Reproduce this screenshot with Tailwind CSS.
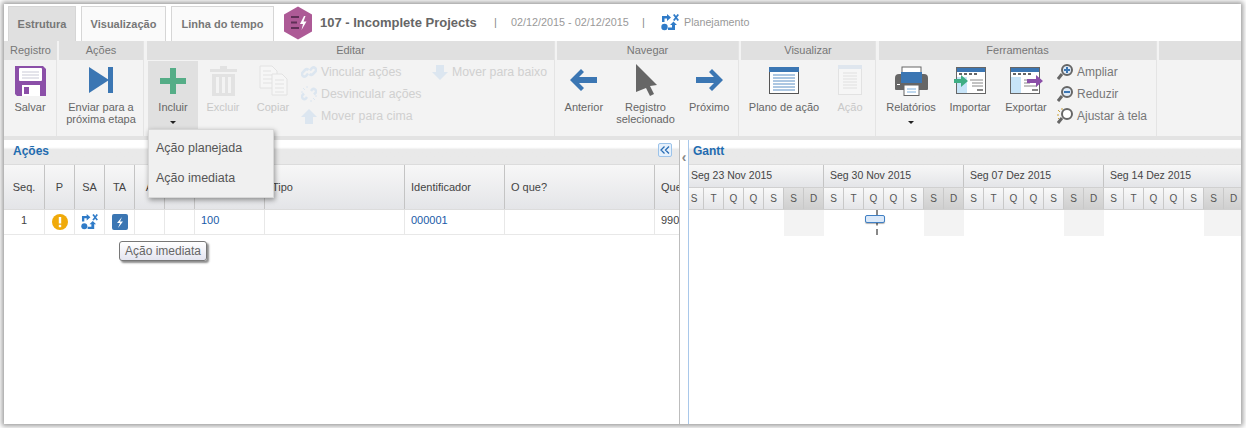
<!DOCTYPE html>
<html lang="en">
<head>
  <meta charset="UTF-8" />
  <title>107 - Incomplete Projects</title>
  <script src="https://cdn.jsdelivr.net/npm/@tailwindcss/browser@4"></script>
</head>
<body class="bg-white h-[428px] w-[1246px] overflow-hidden font-['Liberation_Sans',Arial,sans-serif] text-[11px] text-[#666]">
<div class="relative ml-[4px] mt-[4px] w-[1237px] h-[420px] bg-white shadow-[0_0_5px_2px_rgba(0,0,0,0.4)] flex flex-col">

  <!-- tabs and title -->
  <div class="h-[37px] flex items-end shrink-0">
    <div class="ml-[4px] w-[68px] h-[35px] bg-[#e0e0e0] border border-[#d6d6d6] border-b-0 flex items-center justify-center font-bold text-[#777]">Estrutura</div>
    <div class="ml-[5px] w-[85px] h-[35px] bg-[#fafafa] border border-[#d6d6d6] border-b-0 flex items-center justify-center font-bold text-[#777]">Visualização</div>
    <div class="ml-[5px] w-[103px] h-[35px] bg-[#fafafa] border border-[#d6d6d6] border-b-0 flex items-center justify-center font-bold text-[#777]">Linha do tempo</div>
    <div class="self-center flex items-center ml-[9px]">
      <svg width="30" height="34" viewBox="0 0 30 34"><path d="M15 0.500 29 8.500V25.500L15 33.500 1 25.500V8.500Z" fill="#ad5a96"/><path d="M8 11h8M8 16.500h6M8 22h8" stroke="#5e2f56" stroke-width="2"/><path d="M21 10l-4 8h3l-1.500 6 5-8.500h-3l2-5.500z" fill="#fff"/></svg>
      <span class="ml-[7px] w-[174px] text-[13px] font-bold text-[#666]">107 - Incomplete Projects</span>
      <span class="text-[#888] w-[17px]">|</span>
      <span class="w-[131px] text-[10.800px] text-[#999]">02/12/2015 - 02/12/2015</span>
      <span class="text-[#888] w-[19px]">|</span>
      <svg width="18" height="17" viewBox="0 0 18 17" fill="#2f7bc8"><path d="M1 8V2h5V0l4 3.500-4 3.500V4.500H3.500V8z"/><path d="M12 1l1.500-1L15 2l1.500-2L18 1l-2 2.500L18 6l-1.500 1L15 5l-1.500 2L12 6l2-2.500z"/><circle cx="3.500" cy="13" r="3.200"/><path d="M7 16v-2.500h4V11H9l3.500-3.500L16 11h-2v5z"/></svg>
      <span class="ml-[5px] text-[10.700px] text-[#999]">Planejamento</span>
    </div>
  </div>

  <!-- ribbon -->
  <div class="h-[99px] shrink-0 bg-[#f3f3f3] border-b-[4px] border-[#e3e3e3] flex">
    <div class="w-[53px] flex flex-col border-r border-[#e4e4e4]">
      <div class="h-[19px] bg-[#e0e0e0] text-center leading-[19px] text-[#777] mr-[-1px]">Registro</div>
      <div class="flex flex-col items-center pt-[5px]">
        <svg width="31" height="31" viewBox="0 0 31 31"><path d="M0 1h28l3 3v27H2l-2-2z" fill="#8b4fa8"/><rect x="4" y="3" width="23" height="13" rx="1" fill="#fff"/><path d="M7 7h17M7 10h17M7 13h17" stroke="#c9c9d6"/><rect x="7" y="20" width="18" height="11" fill="#fff"/><rect x="9" y="22" width="5" height="7" fill="#8b4fa8"/></svg>
        <span class="mt-[5px] leading-[12px]">Salvar</span>
      </div>
    </div>
    <div class="ml-[2px] w-[85px] flex flex-col border-r border-[#e4e4e4]">
      <div class="h-[19px] bg-[#e0e0e0] text-center leading-[19px] text-[#777]">Ações</div>
      <div class="flex flex-col items-center pt-[7px]">
        <svg width="25" height="26" viewBox="0 0 25 26" fill="#3b76b3"><path d="M0 0l20 13L0 26z"/><rect x="19" y="0" width="5" height="26"/></svg>
        <span class="mt-[8px] leading-[12px] text-center">Enviar para a<br>próxima etapa</span>
      </div>
    </div>
    <div class="ml-[3px] w-[408px] flex flex-col border-r border-[#e4e4e4]">
      <div class="h-[19px] bg-[#e0e0e0] text-center leading-[19px] text-[#777]">Editar</div>
      <div class="flex flex-1 pl-[1px]">
        <div class="w-[50px] mt-[1px] bg-[#e0e0e0] flex flex-col items-center pt-[7px]">
          <svg width="26" height="26" viewBox="0 0 26 26" fill="#55ad87"><path d="M10 0h6v10h10v6H16v10h-6V16H0v-6h10z"/></svg>
          <span class="mt-[7px] leading-[12px]">Incluir</span>
          <span class="mt-[8px] w-0 h-0 border-x-[3px] border-x-transparent border-t-[3px] border-t-[#222]"></span>
        </div>
        <div class="w-[50px] flex flex-col items-center pt-[5px] text-[#c8c8c8]">
          <svg width="27" height="31" viewBox="0 0 27 31" fill="#e2e2e2"><path d="M0 4h10V1h7v3h10v3H0z"/><path d="M2 9h23v22H2zM6 12v16h3V12zM12 12v16h3V12zM18 12v16h3V12z" fill-rule="evenodd"/></svg>
          <span class="mt-[5px] leading-[12px]">Excluir</span>
        </div>
        <div class="w-[50px] flex flex-col items-center pt-[5px] text-[#c8c8c8]">
          <svg width="29" height="31" viewBox="0 0 29 31" fill="none" stroke="#e2e2e2"><path d="M1 1h12l5 5v17H1z" fill="#f6f6f6"/><path d="M4 6h8M4 10h11M4 14h11M4 18h11"/><path d="M13 9h10l5 5v16H13z" fill="#f6f6f6"/><path d="M16 15h9M16 19h9M16 23h9M16 27h9"/></svg>
          <span class="mt-[5px] leading-[12px]">Copiar</span>
        </div>
        <div class="w-[131px] ml-[3px] pt-[1px] flex flex-col text-[12.300px] text-[#d0d0d0]">
          <div class="h-[22px] flex items-center gap-[4px]"><svg width="16" height="16" viewBox="0 0 16 16" fill="none" stroke="#dce6f0" stroke-width="2.500"><path d="M7 9.500l-2 2.500a2.500 2.500 0 0 1-3.500-3.500L4 6a2.500 2.500 0 0 1 3.500 0M9 6.500L11 4a2.500 2.500 0 0 1 3.500 3.500L12 10a2.500 2.500 0 0 1-3.500 0"/></svg>Vincular ações</div>
          <div class="h-[22px] flex items-center gap-[4px]"><svg width="16" height="16" viewBox="0 0 16 16" fill="none" stroke="#dce6f0" stroke-width="2.500"><path d="M6 11l-1 1.500a2.500 2.500 0 0 1-3.500-3.500L3 7.500M10 5l1-1.500a2.500 2.500 0 0 1 3.500 3.500L13 8.500"/><path d="M2 2l2 2M6 0v2M0 6h2M14 14l-2-2M10 16v-2M16 10h-2" stroke-width="1"/></svg>Desvincular ações</div>
          <div class="h-[22px] flex items-center gap-[4px]"><svg width="16" height="15" viewBox="0 0 16 15" fill="#dce6f0"><path d="M8 0l8 8h-4v7H4V8H0z"/></svg>Mover para cima</div>
        </div>
        <div class="pt-[1px] text-[12.300px] text-[#d0d0d0]">
          <div class="h-[22px] flex items-center gap-[4px]"><svg width="16" height="15" viewBox="0 0 16 15" fill="#dce6f0"><path d="M8 15L0 7h4V0h8v7h4z"/></svg>Mover para baixo</div>
        </div>
      </div>
    </div>
    <div class="ml-[2px] w-[182px] flex flex-col border-r border-[#e4e4e4]">
      <div class="h-[19px] bg-[#e0e0e0] text-center leading-[19px] text-[#777]">Navegar</div>
      <div class="flex flex-1">
        <div class="w-[54px] flex flex-col items-center pt-[9px]">
          <svg width="27" height="22" viewBox="0 0 27 22" fill="#3b76b3"><path d="M11 0l3 3-5 5h18v6H9l5 5-3 3L0 11z"/></svg>
          <span class="mt-[10px] leading-[12px]">Anterior</span>
        </div>
        <div class="w-[70px] flex flex-col items-center pt-[4px]">
          <svg width="23" height="32" viewBox="0 0 23 32" fill="#666" class="ml-[3px]"><path d="M0 0l21 21-7 1 4 8-4 2-4-8-10 4z"/></svg>
          <span class="mt-[5px] leading-[12px] text-center">Registro<br>selecionado</span>
        </div>
        <div class="w-[58px] flex flex-col items-center pt-[9px]">
          <svg width="27" height="22" viewBox="0 0 27 22" fill="#3b76b3"><path d="M16 0l-3 3 5 5H0v6h18l-5 5 3 3 11-11z"/></svg>
          <span class="mt-[10px] leading-[12px]">Próximo</span>
        </div>
      </div>
    </div>
    <div class="ml-[2px] w-[135px] flex flex-col border-r border-[#e4e4e4]">
      <div class="h-[19px] bg-[#e0e0e0] text-center leading-[19px] text-[#777]">Visualizar</div>
      <div class="flex flex-1">
        <div class="w-[86px] flex flex-col items-center pt-[7px]">
          <svg width="30" height="27" viewBox="0 0 30 27"><rect x="0.500" y="0.500" width="29" height="26" fill="#fff" stroke="#555"/><rect width="30" height="5" fill="#3b76b3"/><path d="M4 8h22M4 11h22M4 14h22M4 17h22M4 20h22M4 23h22" stroke="#5b8fc5"/></svg>
          <span class="mt-[7px] leading-[12px]">Plano de ação</span>
        </div>
        <div class="w-[46px] flex flex-col items-center pt-[5px] text-[#c8c8c8]">
          <svg width="24" height="30" viewBox="0 0 24 30"><rect x="0.500" y="0.500" width="23" height="29" fill="#f6f6f6" stroke="#e2e2e2"/><rect width="24" height="4" fill="#dfe6ee"/><path d="M5 8h14M5 11h14M5 14h14M5 17h14M5 20h14M5 23h14" stroke="#e0e0e0"/></svg>
          <span class="mt-[6px] leading-[12px]">Ação</span>
        </div>
      </div>
    </div>
    <div class="ml-[3px] w-[278px] flex flex-col border-r border-[#e4e4e4]">
      <div class="h-[19px] bg-[#e0e0e0] text-center leading-[19px] text-[#777]">Ferramentas</div>
      <div class="flex flex-1">
        <div class="w-[64px] flex flex-col items-center pt-[6px]">
          <svg width="33" height="30" viewBox="0 0 33 30"><rect x="7" y="1" width="19" height="10" fill="#fff" stroke="#666"/><path d="M0 12a4 4 0 0 1 4-4h25a4 4 0 0 1 4 4v11a1 1 0 0 1-1 1H1a1 1 0 0 1-1-1z" fill="#666"/><rect x="6" y="6" width="21" height="11" fill="#3b76b3"/><rect x="9" y="19" width="15" height="10.500" fill="#fff" stroke="#666"/><path d="M12 23h9M12 26h9" stroke="#7fb0dc"/><rect x="2" y="18" width="3" height="1" fill="#fff"/></svg>
          <span class="mt-[5px] leading-[12px]">Relatórios</span>
          <span class="mt-[8px] w-0 h-0 border-x-[3px] border-x-transparent border-t-[3px] border-t-[#222]"></span>
        </div>
        <div class="w-[54px] flex flex-col items-center pt-[7px]">
          <svg width="32" height="27" viewBox="0 0 32 27"><rect x="2.500" y="0.500" width="29" height="26" fill="#fff" stroke="#666"/><rect x="3" y="1" width="28" height="4" fill="#3b76b3"/><path d="M5 7h3M10 7h3M15 7h3M20 7h3" stroke="#666" stroke-width="2"/><rect x="3" y="10" width="10" height="16" fill="#c7e4f8"/><path d="M16 13h13M18 16h11M18 19h11" stroke="#888"/><rect x="23" y="22" width="6" height="2" fill="#888"/><path d="M0 12h7V8l7 6-7 6v-4H0z" fill="#3fae84"/></svg>
          <span class="mt-[7px] leading-[12px]">Importar</span>
        </div>
        <div class="w-[58px] flex flex-col items-center pt-[7px]">
          <svg width="33" height="27" viewBox="0 0 33 27"><rect x="0.500" y="0.500" width="29" height="26" fill="#fff" stroke="#666"/><rect x="1" y="1" width="28" height="4" fill="#3b76b3"/><path d="M3 7h3M8 7h3M13 7h3M18 7h3" stroke="#666" stroke-width="2"/><rect x="1" y="10" width="10" height="16" fill="#c7e4f8"/><path d="M14 13h13M14 16h6M14 19h13" stroke="#888"/><rect x="22" y="22" width="6" height="2" fill="#888"/><path d="M17 12h9V8l7 6-7 6v-4h-9z" fill="#8b4fa8"/></svg>
          <span class="mt-[7px] leading-[12px]">Exportar</span>
        </div>
        <div class="ml-[2px] pt-[1px] flex flex-col text-[12px] text-[#777]">
          <div class="h-[22px] flex items-center gap-[4px]"><svg width="16" height="16" viewBox="0 0 16 16"><path d="M1 15l4-5" stroke="#666" stroke-width="3"/><circle cx="10" cy="6" r="5" fill="#dfeaf6" stroke="#666" stroke-width="2"/><path d="M7 6h6M10 3v6" stroke="#3b76b3" stroke-width="2"/></svg>Ampliar</div>
          <div class="h-[22px] flex items-center gap-[4px]"><svg width="16" height="16" viewBox="0 0 16 16"><path d="M1 15l4-5" stroke="#666" stroke-width="3"/><circle cx="10" cy="6" r="5" fill="#dfeaf6" stroke="#666" stroke-width="2"/><path d="M7 6h6" stroke="#3b76b3" stroke-width="2"/></svg>Reduzir</div>
          <div class="h-[22px] flex items-center gap-[4px]"><svg width="16" height="16" viewBox="0 0 16 16"><path d="M1 15l4-5" stroke="#666" stroke-width="3"/><circle cx="10" cy="6" r="5" fill="#fff" stroke="#666" stroke-width="2"/><path d="M1 2l2 2M0 7h2M5 0v2M1 11l1-1" stroke="#c9a23c"/></svg>Ajustar à tela</div>
        </div>
      </div>
    </div>
    <div class="ml-[2px] flex-1"><div class="h-[19px] bg-[#e0e0e0]"></div></div>
  </div>

  <!-- panels -->
  <div class="flex flex-1 min-h-0">
    <div class="w-[675px] shrink-0 overflow-hidden flex flex-col">
      <div class="h-[24px] shrink-0 bg-gradient-to-b from-white from-30% to-[#e9e9e9] to-40% flex items-center justify-between pl-[9px] pr-[7px]">
        <span class="font-bold text-[12px] text-[#1f6cb0] pb-[3px]">Ações</span>
        <span class="w-[14px] h-[14px] mb-[4px] rounded-[2px] border border-[#9cc3ea] bg-[#e6f1fc] flex items-center justify-center">
          <svg width="10" height="8" viewBox="0 0 10 8" fill="none" stroke="#2a6db5" stroke-width="1.300"><path d="M4.500 0.500L1 4l3.500 3.500M9 0.500L5.500 4 9 7.500"/></svg>
        </span>
      </div>
      <div class="h-[46px] shrink-0 flex border-y border-[#dcdcdc] bg-gradient-to-b from-[#f7f7f7] to-[#e4e5e8] text-[#444] items-stretch">
        <div class="w-[41px] shrink-0 border-r border-[#c4c4c4] flex items-center justify-center">Seq.</div>
        <div class="w-[30px] shrink-0 border-r border-[#c4c4c4] flex items-center justify-center">P</div>
        <div class="w-[30px] shrink-0 border-r border-[#c4c4c4] flex items-center justify-center">SA</div>
        <div class="w-[30px] shrink-0 border-r border-[#c4c4c4] flex items-center justify-center">TA</div>
        <div class="w-[30px] shrink-0 border-r border-[#c4c4c4] flex items-center justify-center">A</div>
        <div class="w-[30px] shrink-0 border-r border-[#c4c4c4]"></div>
        <div class="w-[70px] shrink-0 border-r border-[#c4c4c4]"></div>
        <div class="w-[140px] shrink-0 border-r border-[#c4c4c4] flex items-center pl-[7px]">Tipo</div>
        <div class="w-[100px] shrink-0 border-r border-[#c4c4c4] flex items-center pl-[6px]">Identificador</div>
        <div class="w-[150px] shrink-0 border-r border-[#c4c4c4] flex items-center pl-[6px]">O que?</div>
        <div class="w-[34px] shrink-0 flex items-center pl-[6px] overflow-hidden">Quem</div>
      </div>
      <div class="h-[25px] shrink-0 flex border-b border-[#e8e8e8] text-[#444] items-stretch">
        <div class="w-[41px] shrink-0 border-r border-[#e8e8e8] flex items-center justify-center pb-[3px]">1</div>
        <div class="w-[30px] shrink-0 border-r border-[#e8e8e8] flex items-center justify-center"><svg width="16" height="16" viewBox="0 0 16 16"><circle cx="8" cy="8" r="8" fill="#f0aa0a"/><rect x="6.800" y="3" width="2.400" height="6.500" fill="#fff"/><rect x="6.800" y="10.800" width="2.400" height="2.400" fill="#fff"/></svg></div>
        <div class="w-[30px] shrink-0 border-r border-[#e8e8e8] flex items-center justify-center"><svg width="17" height="16" viewBox="0 0 18 17" fill="#2f7bc8"><path d="M1 8V2h5V0l4 3.500-4 3.500V4.500H3.500V8z"/><path d="M12 1l1.500-1L15 2l1.500-2L18 1l-2 2.500L18 6l-1.500 1L15 5l-1.500 2L12 6l2-2.500z"/><circle cx="3.500" cy="13" r="3.200"/><path d="M7 16v-2.500h4V11H9l3.500-3.500L16 11h-2v5z"/></svg></div>
        <div class="w-[30px] shrink-0 border-r border-[#e8e8e8] flex items-center justify-center"><svg width="16" height="16" viewBox="0 0 16 16"><rect width="16" height="16" rx="2" fill="#3b76b3"/><path d="M10 3L5 9h3l-2 5 5-6.500H8z" fill="#fff"/></svg></div>
        <div class="w-[30px] shrink-0 border-r border-[#e8e8e8]"></div>
        <div class="w-[30px] shrink-0 border-r border-[#e8e8e8]"></div>
        <div class="w-[70px] shrink-0 border-r border-[#e8e8e8] flex items-center pl-[6px] pb-[3px] text-[#1a5aa8]">100</div>
        <div class="w-[140px] shrink-0 border-r border-[#e8e8e8]"></div>
        <div class="w-[100px] shrink-0 border-r border-[#e8e8e8] flex items-center pl-[6px] pb-[3px] text-[#1a5aa8]">000001</div>
        <div class="w-[150px] shrink-0 border-r border-[#e8e8e8]"></div>
        <div class="flex-1 flex items-center pl-[6px] pb-[3px]">990</div>
      </div>
    </div>

    <div class="w-[10px] shrink-0 border-l border-[#bdbdbd] border-r border-r-[#a9c8ea] flex justify-center pt-[11px] text-[#888] text-[14px] leading-[12px] font-bold">‹</div>

    <div class="flex-1 min-w-0 overflow-hidden flex flex-col">
      <div class="h-[24px] shrink-0 bg-gradient-to-b from-white from-30% to-[#e9e9e9] to-40% flex items-center pl-[4px]">
        <span class="font-bold text-[12px] text-[#1f6cb0] pb-[3px]">Gantt</span>
      </div>
      <div class="h-[23px] shrink-0 flex border-t border-[#dcdcdc] bg-gradient-to-b from-[#f7f7f7] to-[#e4e5e8] text-[#444] text-[10.500px]">
        <div class="w-[135px] shrink-0 border-r border-[#c4c4c4] pl-[2px] flex items-center">Seg 23 Nov 2015</div>
        <div class="w-[140px] shrink-0 border-r border-[#c4c4c4] pl-[6px] flex items-center">Seg 30 Nov 2015</div>
        <div class="w-[140px] shrink-0 border-r border-[#c4c4c4] pl-[6px] flex items-center">Seg 07 Dez 2015</div>
        <div class="w-[140px] shrink-0 pl-[6px] flex items-center">Seg 14 Dez 2015</div>
      </div>
      <div id="days" class="h-[23px] shrink-0 flex border-y border-[#d0d0d0] text-[#555] text-[10px]"></div>
      <div class="relative h-[26px] shrink-0 flex">
        <div class="w-[95px] shrink-0"></div>
        <div class="w-[40px] shrink-0 bg-[#f3f3f3]"></div>
        <div class="w-[100px] shrink-0"></div>
        <div class="w-[40px] shrink-0 bg-[#f3f3f3]"></div>
        <div class="w-[100px] shrink-0"></div>
        <div class="w-[40px] shrink-0 bg-[#f3f3f3]"></div>
        <div class="w-[100px] shrink-0"></div>
        <div class="w-[40px] shrink-0 bg-[#f3f3f3]"></div>
        <div class="absolute left-[187px] top-0 h-[25px] border-l-[2px] border-dashed border-[#888]"></div>
        <div class="absolute left-[176px] top-[5px] w-[20px] h-[8px] rounded-[2px] bg-[#dbe9f9] border border-[#3f7fc4] shadow-[0_1px_1px_rgba(0,0,0,0.3)]"></div>
      </div>
    </div>
  </div>

  <!-- dropdown menu -->
  <div class="absolute left-[144px] top-[125px] w-[126px] h-[69px] bg-[#f0f0f0] border border-[#d8d8d8] shadow-[1px_2px_5px_rgba(0,0,0,0.4)] pl-[7px] pt-[2px] text-[12.500px] text-[#555]">
    <div class="h-[31px] pt-[1px] flex items-center">Ação planejada</div>
    <div class="h-[31px] flex items-center">Ação imediata</div>
  </div>

  <!-- tooltip -->
  <div class="absolute left-[115px] top-[237px] w-[88px] h-[20px] rounded-[3px] border border-[#777] bg-gradient-to-b from-white to-[#e4e5f0] shadow-[2px_2px_2px_rgba(0,0,0,0.45)] flex items-center justify-center text-[12px] text-[#666]">Ação imediata</div>
</div>

<script>
  // day letters of the gantt header, four weeks
  const letters = ["S", "T", "Q", "Q", "S", "S", "D"];
  const days = document.getElementById("days");
  let html = "";
  for (let i = 0; i < 28; i++) {
    const weekend = i % 7 > 4;
    const width = i === 0 ? "w-[15px] pr-[4px]" : "w-[20px]";
    const bg = weekend ? "bg-gradient-to-b from-[#e2e2e2] to-[#cfcfcf]" : "bg-gradient-to-b from-[#f9f9f9] to-[#e4e5e8]";
    html += `<div class="${width} ${bg} shrink-0 border-r border-[#c8c8c8] flex items-center justify-center">${letters[i % 7]}</div>`;
  }
  days.innerHTML = html;
</script>
</body>
</html>
